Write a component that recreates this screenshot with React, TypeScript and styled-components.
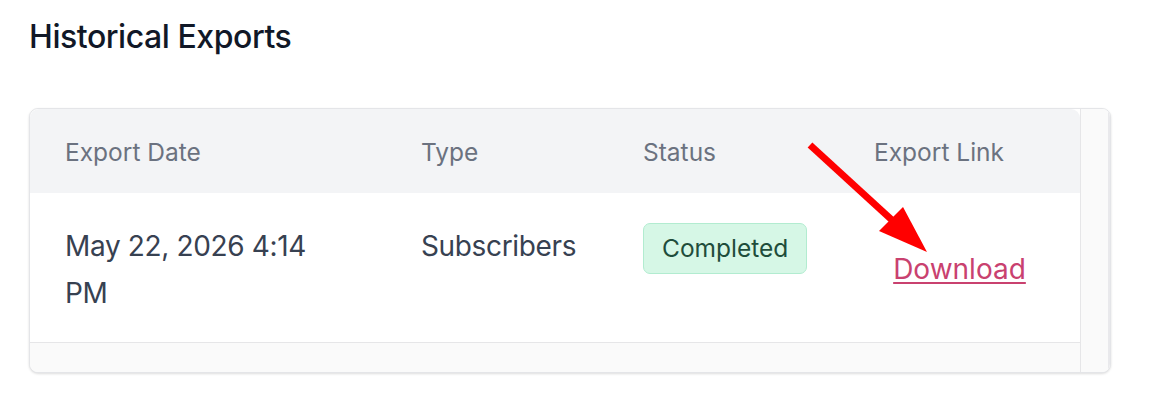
import React from 'react';
import styled, { createGlobalStyle } from 'styled-components';

const GlobalStyle = createGlobalStyle`
    html, body {
        margin: 0;
        padding: 0;
        background: #ffffff;
    }

    body {
        font-family: Inter, "Noto Sans", "Liberation Sans", sans-serif;
        -webkit-font-smoothing: antialiased;
    }
`;

const Page = styled.div`
    position: relative;
    width: 1150px;
    height: 400px;
    padding: 17px 29px 0;
    box-sizing: border-box;
`;

const Heading = styled.h2`
    margin: 0 0 52px;
    font-size: 32px;
    line-height: 39px;
    font-weight: 500;
    letter-spacing: -0.45px;
    color: #111827;
`;

// card with the table viewport and the (empty) scroll tracks around it
const Card = styled.div`
    width: 1082px;
    box-sizing: border-box;
    display: grid;
    grid-template-columns: 1050px 30px;
    grid-template-rows: auto 30px;
    border: 1px solid #e4e5e8;
    border-radius: 9px;
    box-shadow: 0 1px 3px rgba(0, 0, 0, 0.09), 0 1px 2px rgba(0, 0, 0, 0.05);
    overflow: hidden;
    background: #ffffff;
`;

const Viewport = styled.div`
    grid-column: 1;
    grid-row: 1;
    overflow: hidden;
`;

const VTrack = styled.div`
    grid-column: 2;
    grid-row: 1 / span 2;
    background: #fafafa;
    border-left: 1px solid #e6e6e8;
    border-right: 2px solid #e9e9ec;
`;

const HTrack = styled.div`
    grid-column: 1;
    grid-row: 2;
    background: #fafafa;
    border-top: 1px solid #e6e6e8;
`;

const Table = styled.table`
    width: 1050px;
    table-layout: fixed;
    border-collapse: separate;
    border-spacing: 0;
`;

const HeadCell = styled.th<{ $w: number }>`
    width: ${(p) => p.$w}px;
    height: 84px;
    padding: 2px 35px 0;
    box-sizing: border-box;
    background: #f3f4f6;
    text-align: left;
    vertical-align: middle;
    font-size: 24.5px;
    line-height: 30px;
    font-weight: 400;
    color: #6b7280;
    white-space: nowrap;

    &:first-child {
        border-top-left-radius: 9px;
    }

    &:last-child {
        border-top-right-radius: 9px;
    }
`;

const Cell = styled.td<{ $center?: boolean }>`
    padding: 30px 35px 25px;
    vertical-align: top;
    text-align: ${(p) => (p.$center ? 'center' : 'left')};
    font-size: 28px;
    line-height: 47px;
    letter-spacing: -0.35px;
    color: #374151;
`;

const DateText = styled.div`
    max-width: 250px;
`;

const Badge = styled.span`
    display: inline-block;
    padding: 7px 18px;
    border: 1px solid #b2ecd0;
    border-radius: 7px;
    background: #d6f7e6;
    color: #1f4d3b;
    font-size: 24.5px;
    line-height: 35px;
    letter-spacing: 0;
`;

const DownloadLink = styled.a`
    display: inline-block;
    margin-top: 23px;
    color: #c9416f;
    letter-spacing: 0;
    text-decoration: underline;
    text-decoration-thickness: 2px;
    text-underline-offset: 3px;
    cursor: pointer;
`;

const Annotation = styled.svg`
    position: absolute;
    left: 0;
    top: 0;
    pointer-events: none;
`;

const exports = [
    { id: 1, date: 'May 22, 2026 4:14 PM', type: 'Subscribers', status: 'Completed' },
];

const columns = [
    { label: 'Export Date', width: 356 },
    { label: 'Type', width: 222 },
    { label: 'Status', width: 231 },
    { label: 'Export Link', width: 241 },
];

const App: React.FC = () => {
    return (
        <>
            <GlobalStyle />
            <Page>
                <Heading>Historical Exports</Heading>
                <Card>
                    <Viewport>
                        <Table>
                            <thead>
                                <tr>
                                    {columns.map((col) => (
                                        <HeadCell key={col.label} $w={col.width}>{col.label}</HeadCell>
                                    ))}
                                </tr>
                            </thead>
                            <tbody>
                                {exports.map((row) => (
                                    <tr key={row.id}>
                                        <Cell><DateText>{row.date}</DateText></Cell>
                                        <Cell>{row.type}</Cell>
                                        <Cell><Badge>{row.status}</Badge></Cell>
                                        <Cell $center><DownloadLink href="#">Download</DownloadLink></Cell>
                                    </tr>
                                ))}
                            </tbody>
                        </Table>
                    </Viewport>
                    <VTrack />
                    <HTrack />
                </Card>

                {/* red annotation arrow pointing at the download link */}
                <Annotation width="1150" height="400" viewBox="0 0 1150 400">
                    <line x1="810" y1="145" x2="893" y2="221" stroke="#ff0000" strokeWidth="7" />
                    <polygon points="879,231 903,207 927,252" fill="#ff0000" />
                </Annotation>
            </Page>
        </>
    );
};

export default App;
